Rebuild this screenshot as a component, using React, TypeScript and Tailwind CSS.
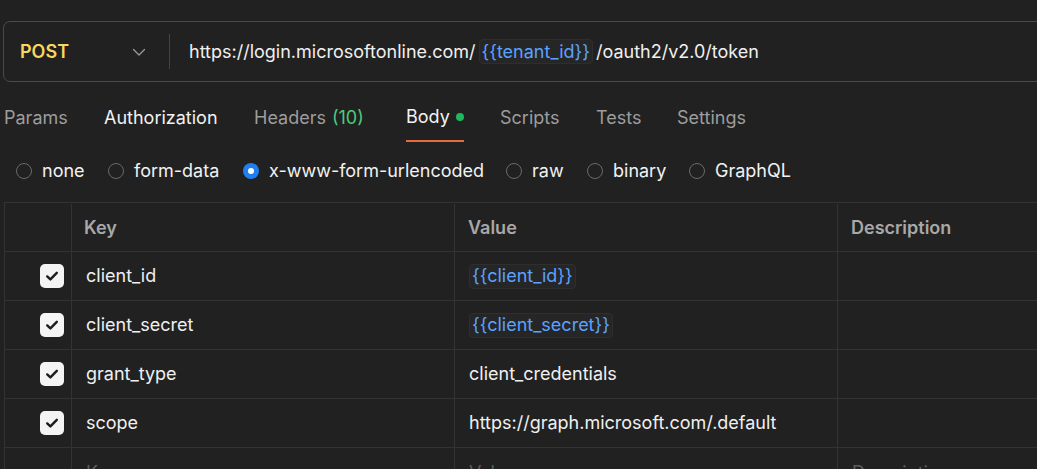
import React from "react";

const Check = () => (
  <div className="w-6 h-6 rounded-[5px] bg-[#f4f4f4] flex items-center justify-center">
    <svg width="16" height="16" viewBox="0 0 16 16" fill="none">
      <path d="M3.2 8.4 L6.4 11.4 L12.8 4.8" stroke="#1c1c1c" strokeWidth="2.4" strokeLinecap="round" strokeLinejoin="round" />
    </svg>
  </div>
);

const Chip = ({ children }: { children: React.ReactNode }) => (
  <span className="inline-flex items-center px-[2px] h-[25px] rounded-[4px] border border-[#2e2e2e] bg-[#262626] text-[#5aa2ff]">
    {children}
  </span>
);

type Row = { key: string; value: React.ReactNode };

const rows: Row[] = [
  { key: "client_id", value: <Chip>{"{{client_id}}"}</Chip> },
  { key: "client_secret", value: <Chip>{"{{client_secret}}"}</Chip> },
  { key: "grant_type", value: <span>client_credentials</span> },
  { key: "scope", value: <span>https://graph.microsoft.com/.default</span> },
];

const Radio = ({ on }: { on?: boolean }) =>
  on ? (
    <div className="w-4 h-4 rounded-full bg-[#1f7ef0] flex items-center justify-center shrink-0">
      <div className="w-[6px] h-[6px] rounded-full bg-white" />
    </div>
  ) : (
    <div className="w-4 h-4 rounded-full border border-[#6a6a6a] shrink-0" />
  );

export default function App() {
  return (
    <div
      className="w-[1037px] h-[469px] overflow-hidden bg-[#212121] text-[18px] leading-[24px] text-[#f0f0f0]"
      style={{ fontFamily: "Inter, 'Noto Sans', sans-serif" }}
    >
      {/* URL bar */}
      <div className="pt-[21px] pl-[3px]">
        <div className="w-[1060px] h-[61px] border border-[#4a4a4a] rounded-[7px] flex items-center">
          <div className="w-[165px] flex items-center pl-[16px] pr-[22px] justify-between">
            <span className="font-semibold text-[#f9d75e]">POST</span>
            <svg width="16" height="16" viewBox="0 0 16 16" fill="none">
              <path d="M2.5 5.5 L8 11 L13.5 5.5" stroke="#9a9a9a" strokeWidth="1.3" strokeLinecap="round" strokeLinejoin="round" />
            </svg>
          </div>
          <div className="w-px h-[35px] bg-[#444444]" />
          <div className="pl-[19px] flex items-center gap-[3px] whitespace-nowrap">
            <span>https://login.microsoftonline.com/</span>
            <Chip>{"{{tenant_id}}"}</Chip>
            <span>/oauth2/v2.0/token</span>
          </div>
        </div>
      </div>

      {/* Tabs */}
      <div className="mt-[14px] h-[46px] flex items-start pl-[4px] whitespace-nowrap text-[#9d9d9d]">
        <div className="w-[100px] h-[44px] flex items-center">Params</div>
        <div className="w-[150px] h-[44px] flex items-center text-[#f2f2f2]">Authorization</div>
        <div className="w-[152px] h-[44px] flex items-center">
          Headers<span className="ml-[6px] text-[#4ccb7a]">(10)</span>
        </div>
        <div className="w-[94px] flex">
          <div className="h-[46px] flex items-center border-b-2 border-[#e8693f] pb-[2px] text-[#f2f2f2]">
            Body
            <span className="ml-[6px] w-[8px] h-[8px] rounded-full bg-[#1fb85a]" />
          </div>
        </div>
        <div className="w-[96px] h-[44px] flex items-center">Scripts</div>
        <div className="w-[81px] h-[44px] flex items-center">Tests</div>
        <div className="h-[44px] flex items-center">Settings</div>
      </div>

      {/* Body types */}
      <div className="h-[60px] pb-[2px] flex items-center pl-[16px] whitespace-nowrap text-[#f2f2f2]">
        <div className="w-[92px] flex items-center gap-[10px]"><Radio /><span>none</span></div>
        <div className="w-[135px] flex items-center gap-[10px]"><Radio /><span>form-data</span></div>
        <div className="w-[263px] flex items-center gap-[10px]"><Radio on /><span>x-www-form-urlencoded</span></div>
        <div className="w-[81px] flex items-center gap-[10px]"><Radio /><span>raw</span></div>
        <div className="w-[102px] flex items-center gap-[10px]"><Radio /><span>binary</span></div>
        <div className="flex items-center gap-[10px]"><Radio /><span>GraphQL</span></div>
      </div>

      {/* Table */}
      <div className="ml-[4px] w-[1100px] border-l border-t border-[#333333] whitespace-nowrap">
        <div className="flex h-[49px] pt-[1px] border-b border-[#333333] text-[#a8a8a8] font-semibold">
          <div className="w-[67px] border-r border-[#333333]" />
          <div className="w-[383px] border-r border-[#333333] flex items-center pl-[12px]">Key</div>
          <div className="w-[383px] border-r border-[#333333] flex items-center pl-[13px]">Value</div>
          <div className="flex-1 flex items-center pl-[13px]">Description</div>
        </div>
        {rows.map((r) => (
          <div key={r.key} className="flex h-[49px] border-b border-[#333333]">
            <div className="w-[67px] border-r border-[#333333] flex items-center justify-end pr-[7px]">
              <Check />
            </div>
            <div className="w-[383px] border-r border-[#333333] flex items-center pl-[14px]">{r.key}</div>
            <div className="w-[383px] border-r border-[#333333] flex items-center pl-[14px]">{r.value}</div>
            <div className="flex-1" />
          </div>
        ))}
        <div className="flex h-[49px] text-[#5c5c5c]">
          <div className="w-[67px] border-r border-[#333333]" />
          <div className="w-[383px] border-r border-[#333333] flex items-center pl-[14px]">Key</div>
          <div className="w-[383px] border-r border-[#333333] flex items-center pl-[14px]">Value</div>
          <div className="flex-1 flex items-center pl-[14px]">Description</div>
        </div>
      </div>
    </div>
  );
}
